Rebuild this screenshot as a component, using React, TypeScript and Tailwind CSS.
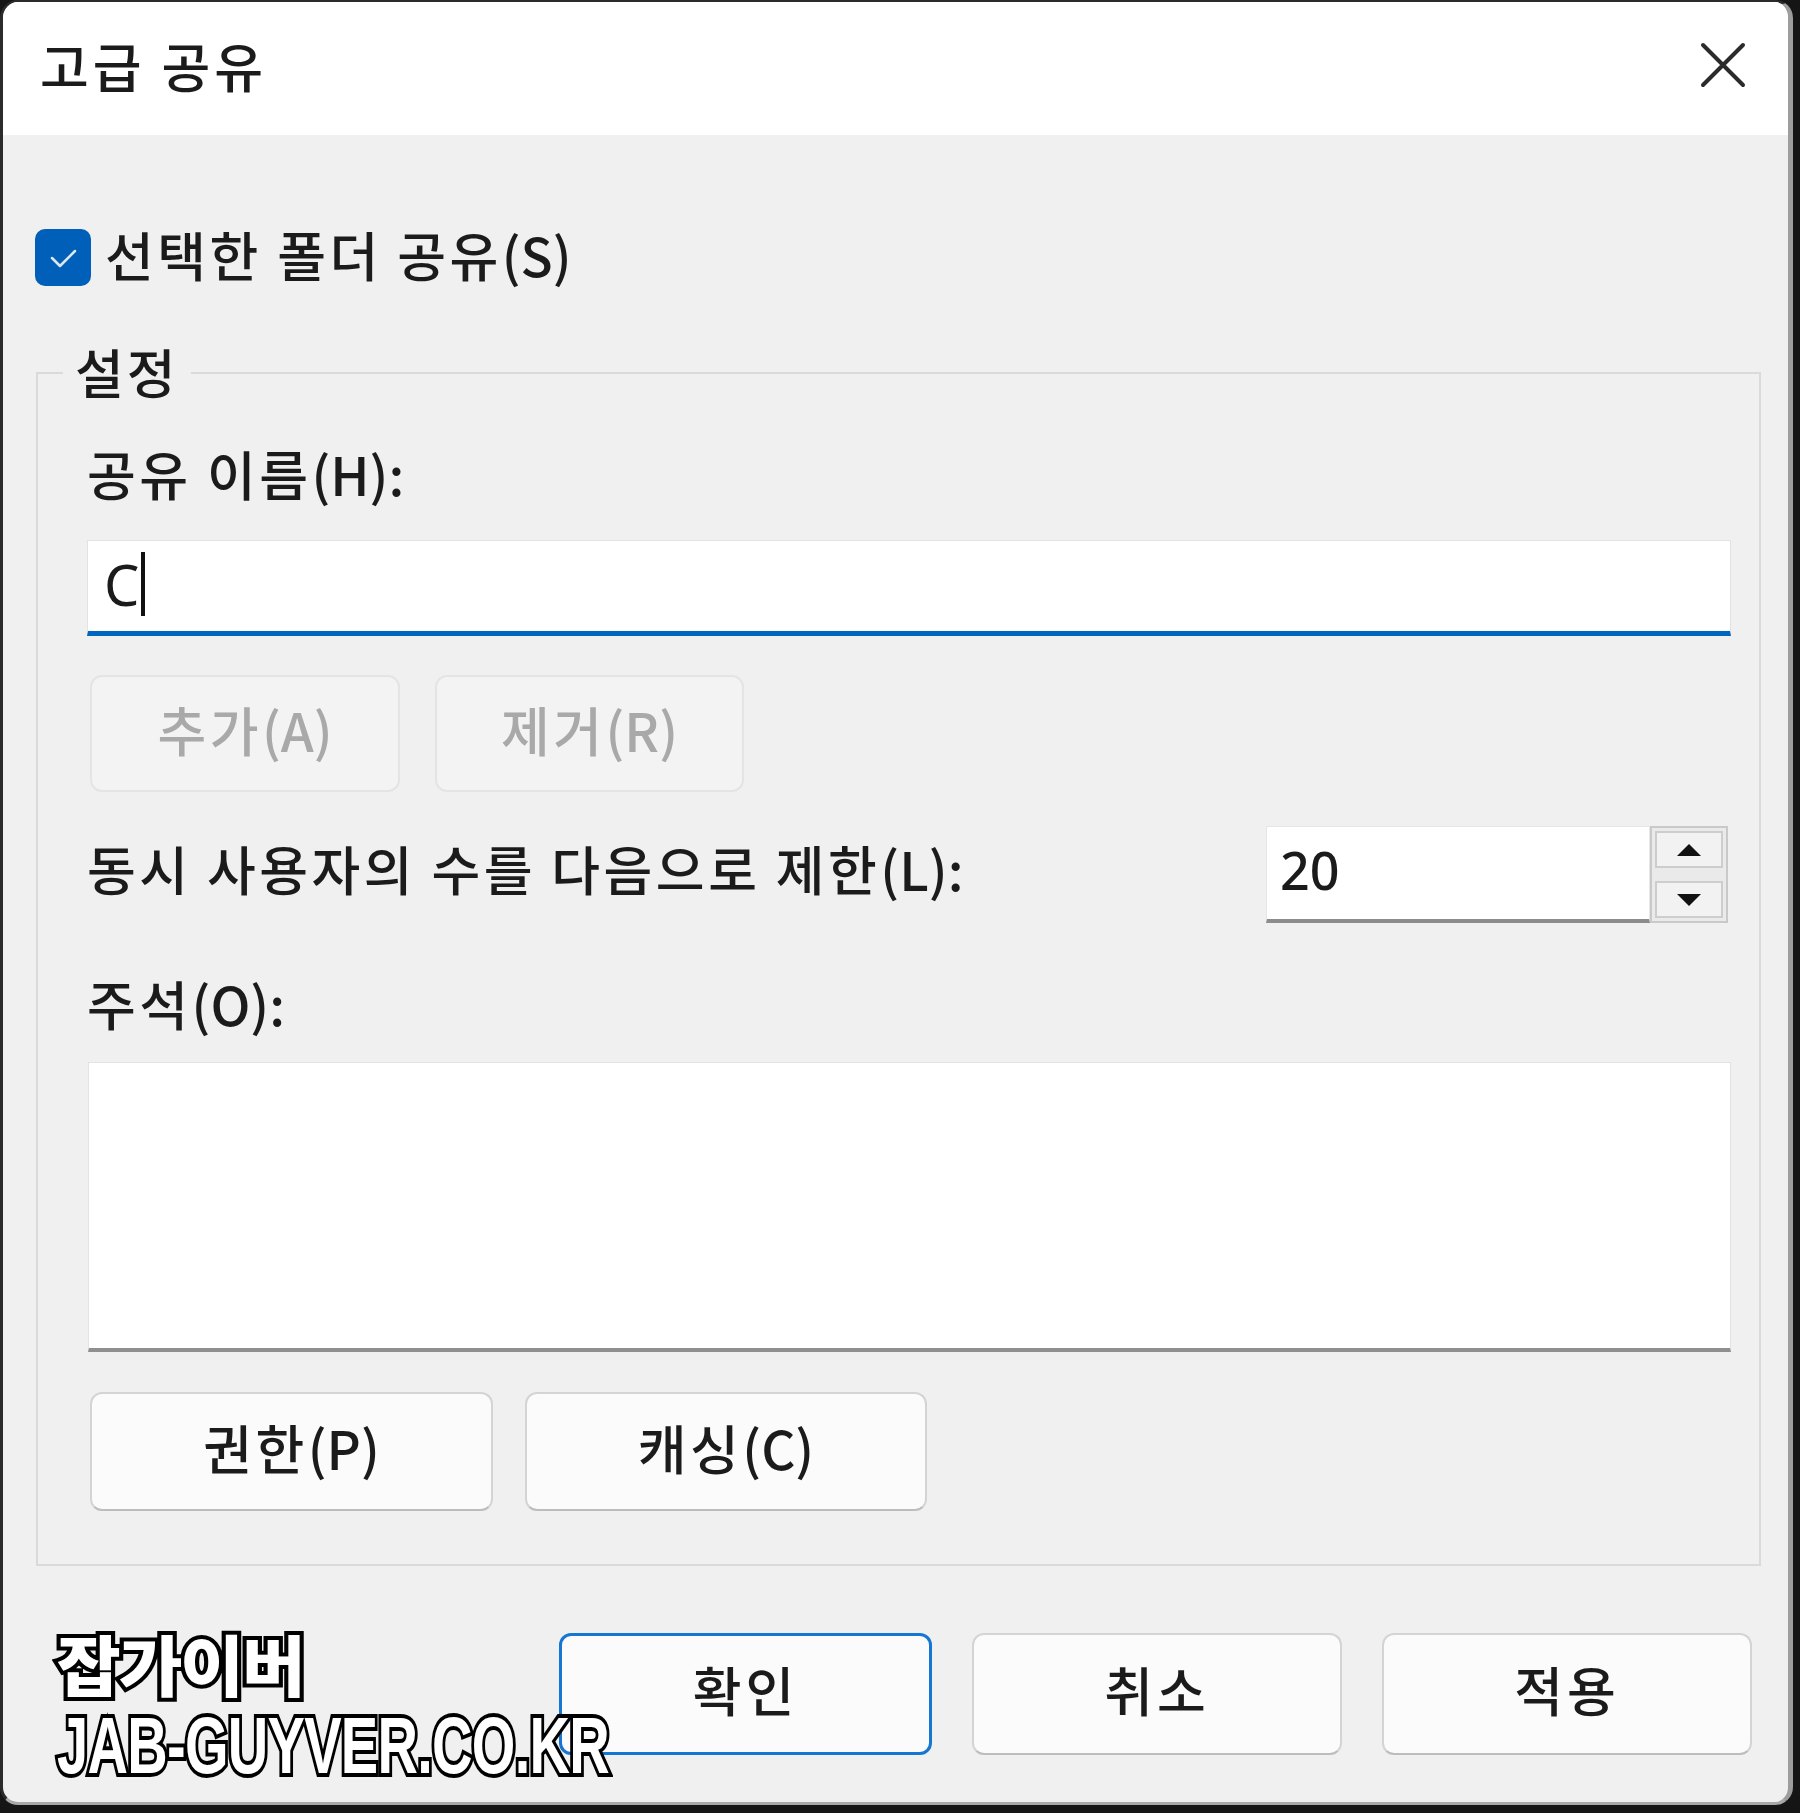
import type { ReactNode } from 'react'

// hangul part gets extra tracking, the mnemonic part in parentheses stays tight
function Txt({ ko, en }: { ko: string; en?: string }) {
  return (
    <>
      <span className="tracking-[3.5px]">{ko}</span>
      {en && <span className="tracking-normal">{en}</span>}
    </>
  )
}

function PushButton({ children, className = '', disabled = false, primary = false }: { children: ReactNode; className?: string; disabled?: boolean; primary?: boolean }) {
  let tone = 'border-2 border-[#d4d4d4] border-b-[#bdbdbd] bg-[#fbfbfb] text-[#1b1b1b]'
  if (disabled) tone = 'border-2 border-[#e4e4e4] bg-[#f3f3f3] text-[#a9a9a9]'
  if (primary) tone = 'border-[3px] border-[#1677d2] bg-[#fbfbfb] text-[#1b1b1b]'
  return (
    <div className={`flex items-center justify-center rounded-[12px] pb-[10px] text-[53px] font-medium leading-[60px] ${tone} ${className}`}>
      {children}
    </div>
  )
}

function SpinArrow({ up }: { up?: boolean }) {
  return (
    <svg width="24" height="12" viewBox="0 0 24 12">
      <polygon points={up ? '12,0 24,12 0,12' : '0,0 24,0 12,12'} fill="#111" />
    </svg>
  )
}

export default function App() {
  return (
    <div className="h-[1813px] w-[1800px] bg-[#151515] pb-[8px] pr-[7px] font-['Noto_Sans_CJK_KR','Noto_Sans',sans-serif]">
      <div className="relative flex h-full flex-col overflow-hidden rounded-[18px] border-b-[3px] border-l-[3px] border-r-[5px] border-t-2 border-b-[#a8a8a8] border-l-[#2b2b2b] border-r-[#9d9d9d] border-t-[#2b2b2b] bg-[#f0f0f0]">
        {/* title bar */}
        <div className="flex h-[133px] shrink-0 items-center justify-between bg-white pb-[7px] pl-[37px] pr-[41px]">
          <span className="text-[53px] font-medium leading-[60px] tracking-[4px] text-[#1b1b1b]">고급 공유</span>
          <svg width="48" height="48" viewBox="0 0 48 48">
            <path d="M4 4 L44 44 M44 4 L4 44" stroke="#2b2b2b" strokeWidth="4" strokeLinecap="round" />
          </svg>
        </div>

        {/* share checkbox */}
        <div className="ml-[32px] mt-[94px] flex h-[57px] items-center gap-[14px]">
          <div className="flex h-[57px] w-[56px] items-center justify-center rounded-[10px] bg-[#005fb8]">
            <svg width="30" height="22" viewBox="0 0 30 22">
              <path d="M4 11 L12 19 L27 4" stroke="#dbe9f7" strokeWidth="2.5" fill="none" strokeLinecap="round" strokeLinejoin="round" />
            </svg>
          </div>
          <span className="pb-[8px] text-[53px] font-medium leading-[60px] text-[#1b1b1b]">
            <Txt ko="선택한 폴더 공유" en="(S)" />
          </span>
        </div>

        {/* settings group */}
        <fieldset className="ml-[33px] mr-[27px] mt-[55px] border-2 border-[#dadada] pb-[53px] pl-[49px] pr-[28px]">
          <legend className="-ml-[24px] px-[12px] pb-[4px] text-[53px] font-medium leading-[60px] tracking-[3px] text-[#1b1b1b]">설정</legend>

          <div className="mt-[38px] text-[53px] font-medium leading-[60px] text-[#1b1b1b]">
            <Txt ko="공유 이름" en="(H):" />
          </div>
          <div className="mt-[37px] flex h-[96px] items-center border border-b-[5px] border-[#e3e3e3] border-b-[#0067c0] bg-white pb-[4px] pl-[16px]">
            <span className="font-['Noto_Sans',sans-serif] text-[56px] leading-[60px] text-[#1b1b1b]">C</span>
            <span className="ml-[2px] h-[64px] w-[4px] bg-[#111]" />
          </div>

          <div className="mt-[39px] flex gap-[35px] pl-[3px]">
            <PushButton disabled className="h-[117px] w-[310px]">
              <Txt ko="추가" en="(A)" />
            </PushButton>
            <PushButton disabled className="h-[117px] w-[309px]">
              <Txt ko="제거" en="(R)" />
            </PushButton>
          </div>

          <div className="mt-[34px] flex h-[97px] items-center justify-between">
            <span className="pb-[14px] text-[53px] font-medium leading-[60px] text-[#1b1b1b]">
              <Txt ko="동시 사용자의 수를 다음으로 제한" en="(L):" />
            </span>
            <div className="mr-[3px] flex h-[97px]">
              <div className="flex w-[384px] items-center border border-b-[4px] border-[#e6e6e6] border-b-[#8c8c8c] bg-white pb-[6px] pl-[13px]">
                <span className="font-['Noto_Sans',sans-serif] text-[52px] font-medium leading-[60px] text-[#1b1b1b]">20</span>
              </div>
              <div className="flex w-[78px] flex-col justify-between border-2 border-[#c9c9c9] bg-[#eaeaea] p-[3px]">
                <div className="flex h-[37px] items-center justify-center border-2 border-[#cdcdcd] bg-[#f2f2f2]">
                  <SpinArrow up />
                </div>
                <div className="flex h-[37px] items-center justify-center border-2 border-[#cdcdcd] bg-[#f2f2f2]">
                  <SpinArrow />
                </div>
              </div>
            </div>
          </div>

          <div className="mt-[50px] text-[53px] font-medium leading-[60px] text-[#1b1b1b]">
            <Txt ko="주석" en="(O):" />
          </div>
          <div className="ml-[1px] mt-[29px] h-[290px] border border-b-[4px] border-[#e3e3e3] border-b-[#8f8f8f] bg-white" />

          <div className="mt-[40px] flex gap-[32px] pl-[3px]">
            <PushButton className="h-[119px] w-[403px]">
              <Txt ko="권한" en="(P)" />
            </PushButton>
            <PushButton className="h-[119px] w-[402px]">
              <Txt ko="캐싱" en="(C)" />
            </PushButton>
          </div>
        </fieldset>

        {/* dialog buttons */}
        <div className="mt-[67px] flex justify-end gap-[40px] pr-[36px]">
          <PushButton primary className="h-[122px] w-[373px] tracking-[4px]">확인</PushButton>
          <PushButton className="h-[122px] w-[370px] tracking-[4px]">취소</PushButton>
          <PushButton className="h-[122px] w-[370px] tracking-[4px]">적용</PushButton>
        </div>

        {/* watermark */}
        <div className="absolute left-[54px] top-[1622px] flex flex-col text-white">
          <span className="origin-left scale-x-[1.05] text-[66px] font-black leading-[76px] tracking-[-2px] [-webkit-text-stroke:8px_black] [paint-order:stroke_fill]">잡가이버</span>
          <span className="mt-[4px] origin-left scale-x-[0.7] font-['Liberation_Sans',sans-serif] text-[80px] font-bold leading-[84px] tracking-[-1px] [-webkit-text-stroke:8px_black] [paint-order:stroke_fill]">JAB-GUYVER.CO.KR</span>
        </div>
      </div>
    </div>
  )
}
